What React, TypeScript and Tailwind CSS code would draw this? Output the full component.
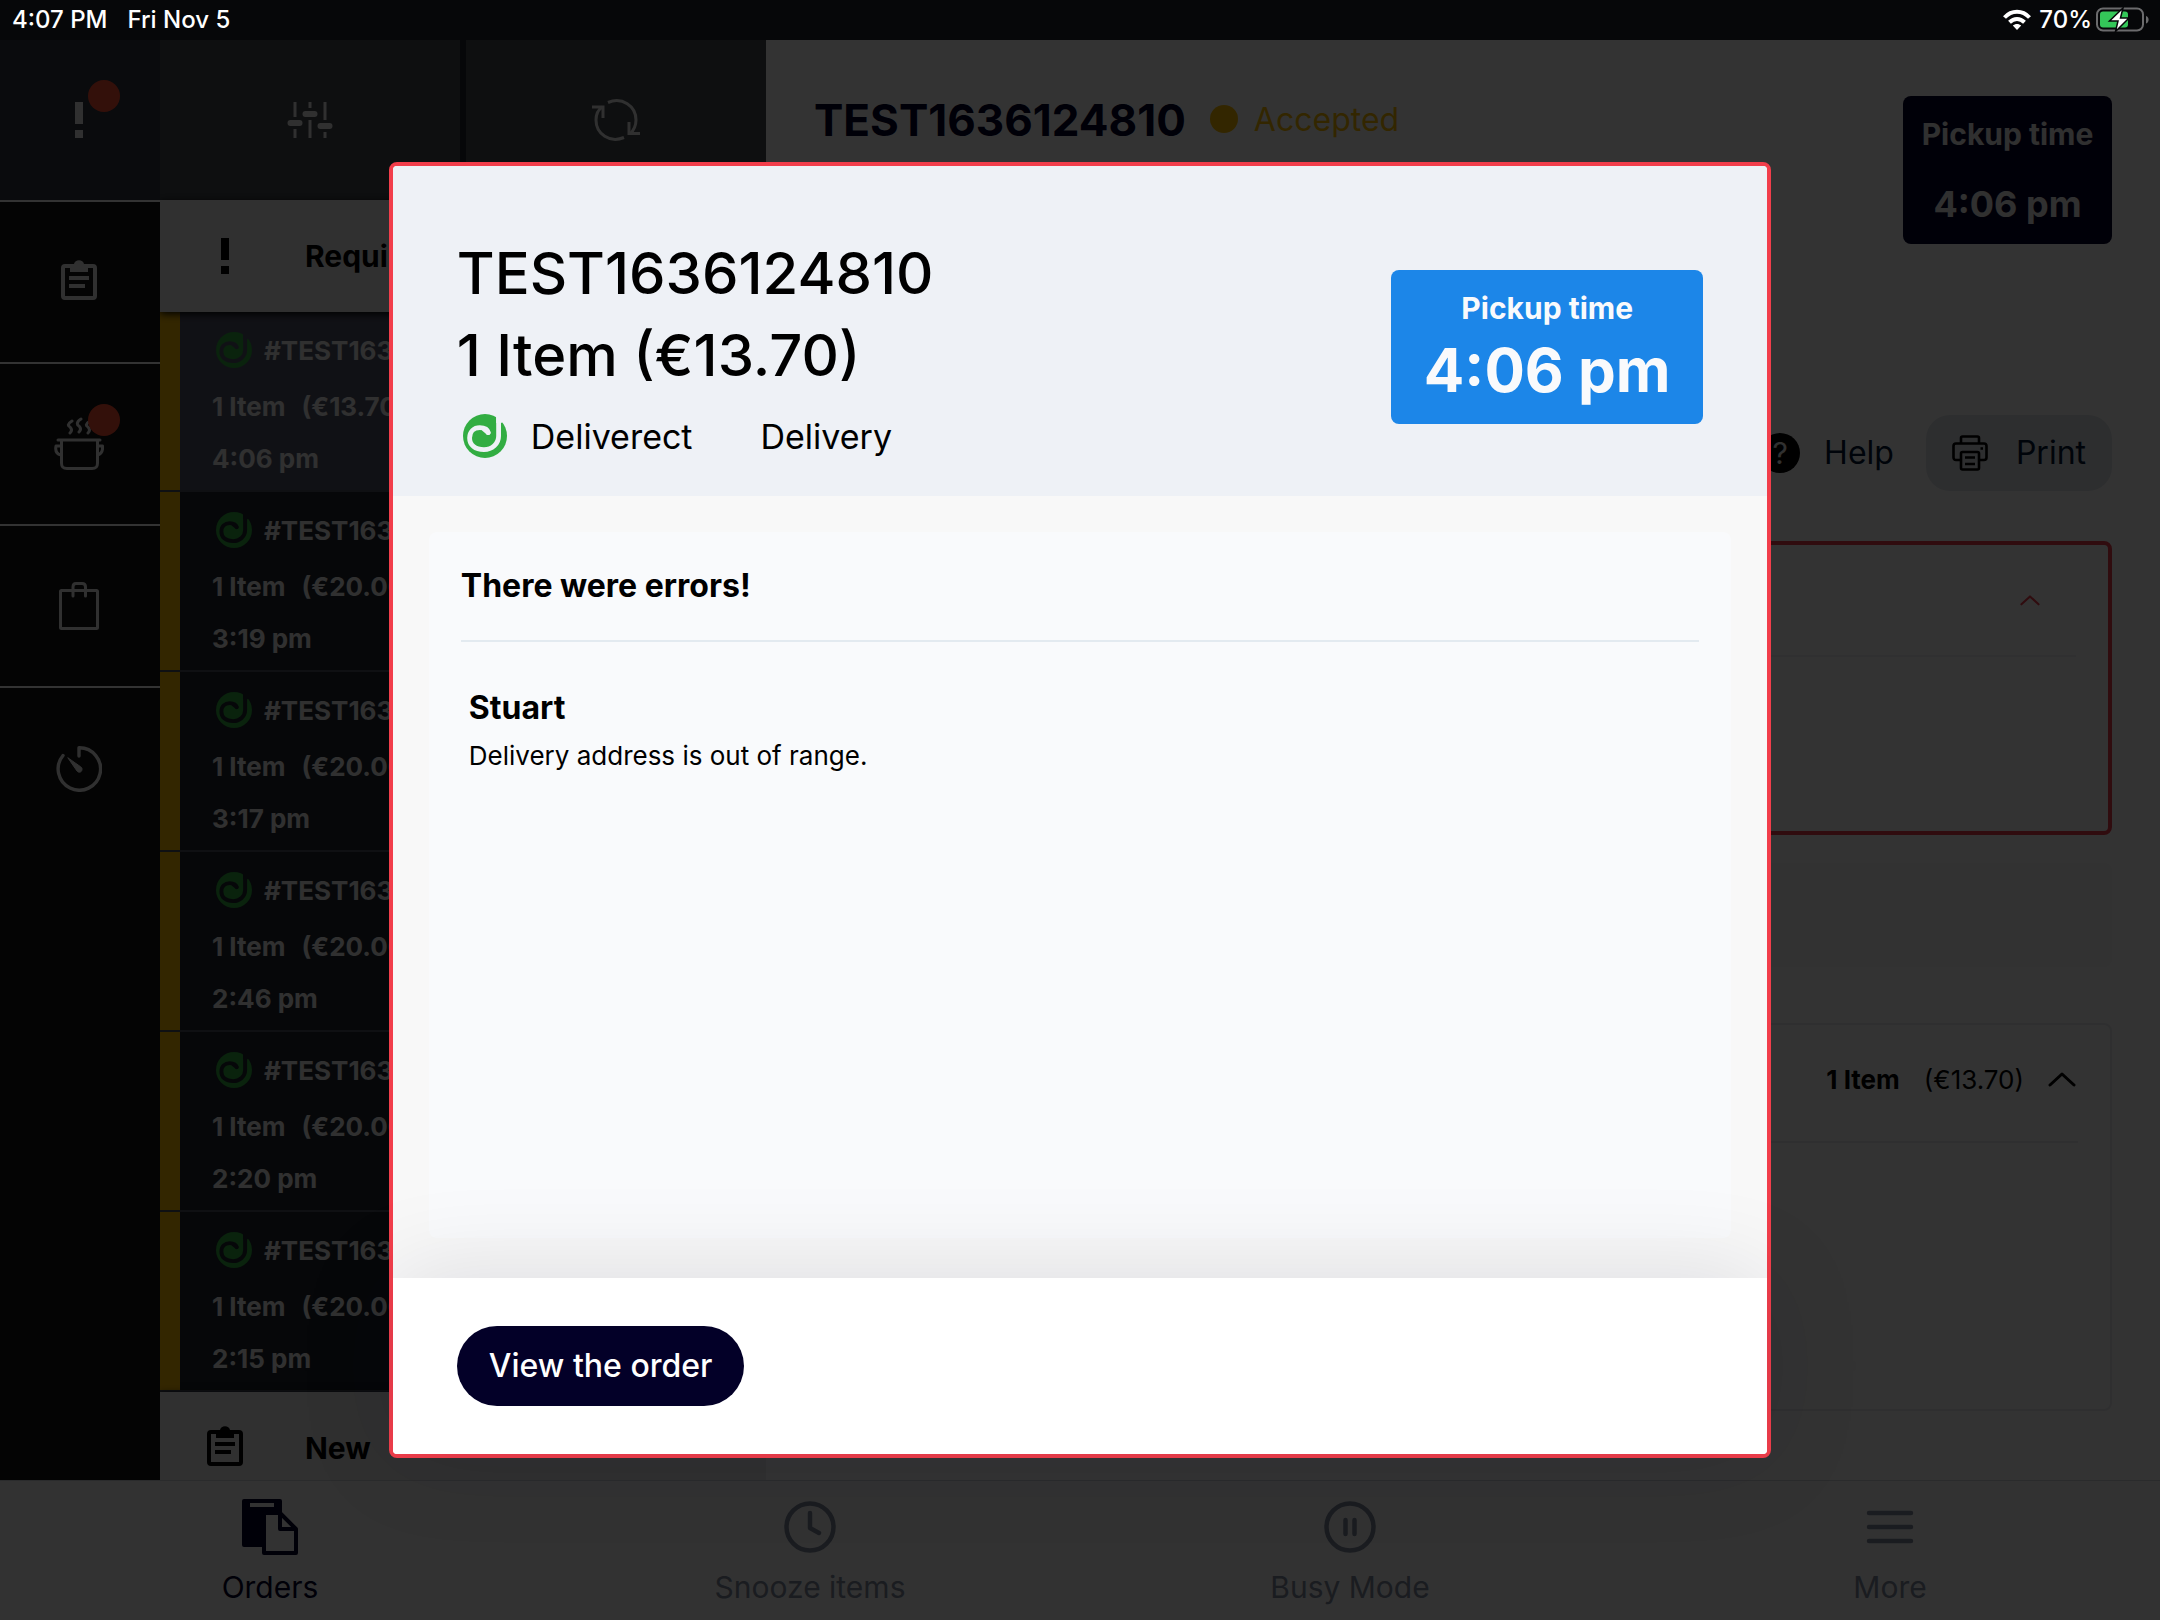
import { useId, type ReactNode } from 'react'

interface Order {
  total: string
  time: string
}

const orders: Order[] = [
  { total: '(€13.70)', time: '4:06 pm' },
  { total: '(€20.00)', time: '3:19 pm' },
  { total: '(€20.00)', time: '3:17 pm' },
  { total: '(€20.00)', time: '2:46 pm' },
  { total: '(€20.00)', time: '2:20 pm' },
  { total: '(€20.00)', time: '2:15 pm' },
]

const DeliverectLogo = ({ className }: { className: string }) => {
  const id = useId()
  return (
    <svg viewBox="0 0 44 44" className={className} aria-hidden="true">
      <mask id={id}>
        <rect width="44" height="44" fill="#fff" />
        <path
          d="M35.6 -2V22C35.6 30 29 35.6 21 35.6C12 35.6 6.6 31 6.6 24C6.6 17.5 11 13.6 16.8 13.6C22 13.6 25 16 25.2 18.6"
          fill="none"
          stroke="#000"
          strokeWidth="4.8"
          strokeLinecap="round"
        />
        <path d="M33.2 -1H44V2L38.4 9H33.2Z" fill="#000" />
        <path d="M20 14.5C25 14 28 16.5 27.6 19C27.2 21.6 24.6 21.4 22.6 19.4L19 16.6Z" fill="#000" />
      </mask>
      <circle cx="22" cy="22" r="22" fill="#32ad42" mask={`url(#${id})`} />
    </svg>
  )
}

const ExclamationIcon = ({ className }: { className: string }) => (
  <svg viewBox="0 0 10 36" className={className} fill="currentColor" aria-hidden="true">
    <path d="M1 0H9V22H1ZM1 28H9V36H1Z" />
  </svg>
)

const ClipboardIcon = ({ className }: { className: string }) => (
  <svg viewBox="0 0 36 40" className={className} aria-hidden="true">
    <rect x="2" y="6" width="32" height="32" rx="2" fill="none" stroke="currentColor" strokeWidth="4" />
    <path
      d="M9 4H13A5.2 5.2 0 0 1 23 4H27V12H9ZM18 4A2 2 0 1 0 18 8A2 2 0 1 0 18 4Z"
      fill="currentColor"
      fillRule="evenodd"
    />
    <path d="M8 18H28M8 26H24" stroke="currentColor" strokeWidth="4" />
  </svg>
)

const PotIcon = () => (
  <svg viewBox="0 0 50 54" className="h-[54px] w-[50px]" fill="none" stroke="currentColor" strokeWidth="3" strokeLinecap="round" strokeLinejoin="round" aria-hidden="true">
    <path d="M18 4C13 7 14 9 16 10C18 12 18 14 16 16M27 2C22 5 23 8 25 9C27 11 27 13 25 15M36 4C31 7 32 9 34 10C36 12 36 14 34 16" />
    <path d="M4 23H46M7.5 23V46C7.5 50 9 51.5 13 51.5H38C42 51.5 43.5 50 43.5 46V23" />
    <path d="M7 29H2C1 34 3 37 7 38M43.5 29H48.5C49 34 47 37 43.5 38" />
  </svg>
)

const BagIcon = () => (
  <svg viewBox="0 0 40 48" className="h-12 w-10" fill="none" stroke="currentColor" strokeWidth="3" strokeLinecap="round" strokeLinejoin="round" aria-hidden="true">
    <rect x="1.5" y="8.5" width="37" height="38" rx="1" />
    <path d="M14 14V5C14 2.5 15 1.5 17 1.5H23C25 1.5 26.5 2.5 26.5 5V14" />
  </svg>
)

const TimerIcon = () => (
  <svg viewBox="0 0 46 46" className="size-[46px]" fill="none" stroke="currentColor" strokeWidth="3.4" strokeLinecap="round" strokeLinejoin="round" aria-hidden="true">
    <path d="M23 10V1.8A21.2 21.2 0 1 1 7 9.5" />
    <path d="M12 12L21 25C23 27.5 26.5 26 26 22.5C25.8 21.8 25.5 21.3 25 21Z" fill="currentColor" strokeWidth="1" />
  </svg>
)

const SlidersIcon = () => (
  <svg viewBox="0 0 46 36" className="h-9 w-[46px]" fill="none" stroke="currentColor" aria-hidden="true">
    <path d="M8 0V15M8 27V36M23 0V6M23 18V36M38 0V18M38 30V36" strokeWidth="3" />
    <path d="M3.5 21H12.5M18.5 12H27.5M33.5 24H42.5" strokeWidth="6" strokeLinecap="round" />
  </svg>
)

const RefreshIcon = () => (
  <svg viewBox="0 0 50 42" className="h-[42px] w-[50px]" fill="none" stroke="currentColor" strokeWidth="3" aria-hidden="true">
    <path d="M17 3.5C31 -2.5 45 7 45 21C45 26 43 31 39 35" />
    <path d="M33 38.5C19 44.5 5 35 5 21C5 16 7 11 11 8" />
    <path d="M1 8H12V19M49 34.5H38V23" />
  </svg>
)

const PrinterIcon = () => (
  <svg viewBox="0 0 36 36" className="size-9 text-black" fill="none" stroke="currentColor" strokeWidth="2.6" strokeLinejoin="round" aria-hidden="true">
    <path d="M9 8.5V3C9 2 9.5 1.5 10.5 1.5H25.5C26.5 1.5 27 2 27 3V8.5" />
    <path d="M9 25H4C2.5 25 1.5 24 1.5 22.5V11C1.5 9.5 2.5 8.5 4 8.5H32C33.5 8.5 34.5 9.5 34.5 11V22.5C34.5 24 33.5 25 32 25H27" />
    <rect x="9" y="17" width="18" height="17.5" rx="1.5" />
    <path d="M13 22.5H23M13 29H23M28.5 13.5H31" />
  </svg>
)

const ChevronUp = ({ className }: { className: string }) => (
  <svg viewBox="0 0 28 16" className={className} fill="none" stroke="currentColor" strokeWidth="3" strokeLinecap="round" strokeLinejoin="round" aria-hidden="true">
    <path d="M2 14L14 3L26 14" />
  </svg>
)

const OrdersIcon = () => (
  <svg viewBox="0 0 56 56" className="size-14" fill="none" aria-hidden="true">
    <path d="M2 0H38Q40 0 40 2V14H24V48H2Q0 48 0 46V2Q0 0 2 0ZM8 4V8H32V4Z" fill="currentColor" fillRule="evenodd" />
    <path d="M22 14H38L54 30V54H22Z" stroke="currentColor" strokeWidth="4" strokeLinejoin="round" />
    <path d="M38 14V30H54" stroke="currentColor" strokeWidth="4" strokeLinejoin="round" />
  </svg>
)

const ClockIcon = () => (
  <svg viewBox="0 0 56 56" className="size-14" fill="none" stroke="currentColor" strokeWidth="4.5" strokeLinecap="round" strokeLinejoin="round" aria-hidden="true">
    <circle cx="28" cy="28" r="23.5" />
    <path d="M28 14V29L37 34" />
  </svg>
)

const PauseIcon = () => (
  <svg viewBox="0 0 56 56" className="size-14" fill="none" stroke="currentColor" strokeWidth="4.5" strokeLinecap="round" aria-hidden="true">
    <circle cx="28" cy="28" r="23.5" />
    <path d="M23.5 21V35M32.5 21V35" />
  </svg>
)

const MenuIcon = () => (
  <svg viewBox="0 0 56 56" className="size-14" stroke="currentColor" strokeWidth="4.5" strokeLinecap="round" aria-hidden="true">
    <path d="M7 14H49M7 28H49M7 42H49" />
  </svg>
)

const StatusBar = () => (
  <header className="relative z-20 flex h-10 shrink-0 items-center bg-[#060709] pr-2.5 pl-3 text-2xl font-medium text-white">
    <span>4:07 PM</span>
    <span className="ml-5">Fri Nov 5</span>
    <svg viewBox="0 0 28 22" className="mr-2 ml-auto h-[22px] w-7" fill="none" stroke="#fff" strokeWidth="4" aria-hidden="true">
      <path d="M1.5 8.5C8.5 0.8 19.5 0.8 26.5 8.5" />
      <path d="M6.5 13.2C11 8.8 17 8.8 21.5 13.2" />
      <path d="M14 21L9.8 16.6C12 14.4 16 14.4 18.2 16.6Z" fill="#fff" stroke="none" />
    </svg>
    <span>70%</span>
    <svg viewBox="0 0 54 26" className="ml-1 h-[26px] w-[54px]" aria-hidden="true">
      <rect x="1" y="1.5" width="46" height="22" rx="6" fill="none" stroke="#6b6b6d" strokeWidth="2" />
      <path d="M50 9C53.5 10 53.5 15.5 50 16.5Z" fill="#6b6b6d" />
      <rect x="4" y="4.5" width="28" height="16" rx="3" fill="#34c759" />
      <path d="M27 1L13.5 14H22L19.5 24.5L33 11H24.5Z" fill="#fff" stroke="#060709" strokeWidth="1.5" />
    </svg>
  </header>
)

interface RailButtonProps {
  label: string
  badge?: boolean
  className?: string
  children: ReactNode
}

const RailButton = ({ label, badge, className = 'border-b-2', children }: RailButtonProps) => (
  <button
    type="button"
    aria-label={label}
    className={`relative flex h-[162px] items-center justify-center border-white pr-0.5 text-[#f0f0f0] ${className}`}
  >
    {children}
    {badge && <span className="absolute top-10 right-10 size-8 rounded-full bg-[#ff5033]" />}
  </button>
)

const OrderRow = ({ order, selected }: { order: Order; selected: boolean }) => (
  <li
    className={`flex h-[180px] border-b-2 border-[#4b5060] text-[26px] font-bold text-[#f0f0f0] ${
      selected ? 'bg-[#52566a]' : 'bg-[#1e232d]'
    }`}
  >
    <span className="w-5 bg-[#ffbe00]" />
    <div className="flex flex-1 flex-col pt-3 pl-8">
      <div className="flex h-[52px] items-center gap-3 pl-1">
        <DeliverectLogo className="size-9" />
        <span>#TEST1636124810</span>
      </div>
      <div className="flex h-[60px] items-center gap-4">
        <span>1 Item</span>
        <span>{order.total}</span>
      </div>
      <div className="flex h-11 items-center">{order.time}</div>
    </div>
  </li>
)

const SectionHeader = ({ icon, title }: { icon: ReactNode; title: string }) => (
  <h2 className="relative flex h-28 shrink-0 items-center bg-[#f0f0f0] text-3xl font-bold text-black shadow-[0_2px_8px_#000]">
    <span className="flex w-[145px] justify-center pr-4">{icon}</span>
    {title}
  </h2>
)

const OrderList = () => (
  <section className="flex w-[606px] shrink-0 flex-col overflow-hidden bg-[#f0f0f0]">
    <div className="grid h-40 shrink-0 grid-cols-2 gap-1.5 bg-[#1e232d]">
      <button type="button" aria-label="Filter orders" className="flex items-center justify-center bg-[#464b50] text-[#f0f0f0]">
        <SlidersIcon />
      </button>
      <button type="button" aria-label="Refresh" className="flex items-center justify-center bg-[#464b50] text-[#f0f0f0]">
        <RefreshIcon />
      </button>
    </div>
    <SectionHeader icon={<ExclamationIcon className="h-9 w-2.5" />} title="Requires attention" />
    <ul className="shrink-0">
      {orders.map((order, i) => (
        <OrderRow key={order.time} order={order} selected={i === 0} />
      ))}
    </ul>
    <SectionHeader icon={<ClipboardIcon className="mb-1 h-10 w-9" />} title="New" />
  </section>
)

const OrderDetail = () => (
  <main className="flex min-w-0 flex-1 flex-col bg-white px-12 pt-14">
    <div className="flex h-[148px] items-start">
      <h1 className="text-[44px] leading-[48px] font-bold text-[#030028]">TEST1636124810</h1>
      <span className="mt-[9px] ml-6 size-7 rounded-full bg-[#ffbe00]" />
      <span className="ml-4 text-[32px] leading-[48px] text-[#ffbe00]">Accepted</span>
      <div className="ml-auto flex h-[148px] w-[209px] flex-col items-center rounded-lg bg-[#030028] pt-4 font-bold text-[#f0f0f0]">
        <span className="text-3xl leading-[44px]">Pickup time</span>
        <span className="mt-6 text-4xl leading-[48px]">4:06 pm</span>
      </div>
    </div>
    <div className="mt-[171px] flex h-[76px] shrink-0 items-center justify-end text-[32px] text-[#001432]">
      <button type="button" className="mr-8 flex items-center gap-6">
        <span className="flex size-10 items-center justify-center rounded-full bg-black text-3xl text-[#f0f0f0]">?</span>
        Help
      </button>
      <button type="button" className="flex h-[76px] items-center gap-7 rounded-3xl bg-[#e1e6eb] px-6.5">
        <PrinterIcon />
        Print
      </button>
    </div>
    <section className="mt-[50px] h-[294px] shrink-0 rounded-lg border-4 border-[#f03c4b] px-8">
      <div className="flex h-[112px] items-center justify-end border-b-2 border-[#f0f0f2] pr-9">
        <ChevronUp className="h-3 w-5 text-[#f03c4b]" />
      </div>
    </section>
    <section className="mt-7 h-[104px] shrink-0 rounded-lg bg-[#f8f8f8]" />
    <section className="mt-14 h-[388px] shrink-0 rounded-lg border-2 border-[#e8eaee] px-8">
      <div className="flex h-[118px] items-center justify-end border-b-2 border-[#e8eaee] pr-0.5 pb-2 text-[26px] text-black">
        <span className="font-bold">1 Item</span>
        <span className="ml-6">(€13.70)</span>
        <ChevronUp className="ml-6 h-4 w-7" />
      </div>
    </section>
  </main>
)

interface NavButtonProps {
  label: string
  active?: boolean
  children: ReactNode
}

const NavButton = ({ label, active = false, children }: NavButtonProps) => (
  <button
    type="button"
    className={`flex flex-col items-center gap-2.5 pt-[18px] text-3xl leading-[44px] ${active ? 'text-[#030028]' : 'text-[#828ca0]'}`}
  >
    {children}
    {label}
  </button>
)

const ErrorDialog = () => (
  <div className="absolute inset-0 z-10 flex items-center justify-center bg-black/80">
    <div
      role="dialog"
      aria-modal="true"
      aria-labelledby="order-title"
      className="flex h-4/5 w-[64%] flex-col rounded-lg border-4 border-[#f23e4b] bg-[#f8f8f8] text-black"
    >
      <div className="flex h-[330px] shrink-0 items-start justify-between rounded-t bg-[#eef1f6] px-16">
        <div className="flex flex-col pt-[66px]">
          <h2 id="order-title" className="text-[58px] leading-[82px] font-medium">
            TEST1636124810
            <br />1 Item (€13.70)
          </h2>
          <div className="flex h-20 items-center pl-1.5 text-[34px]">
            <DeliverectLogo className="size-11" />
            <span className="ml-6">Deliverect</span>
            <span className="ml-17">Delivery</span>
          </div>
        </div>
        <div className="mt-26 flex h-[154px] w-[312px] flex-col items-center rounded-lg bg-[#1c86e8] pt-4 font-bold text-[#f9fafc]">
          <span className="text-3xl leading-[44px]">Pickup time</span>
          <span className="mt-2 text-6xl leading-[64px]">4:06 pm</span>
        </div>
      </div>
      <div className="flex min-h-0 flex-1 flex-col px-9 pt-9 pb-10">
        <section className="flex-1 rounded-lg bg-[#f9fafc] px-8">
          <h3 className="flex h-[110px] items-center border-b-2 border-[#e3eaf0] text-[32px] font-bold">There were errors!</h3>
          <div className="px-2 pt-11">
            <h4 className="text-[32px] leading-[44px] font-bold">Stuart</h4>
            <p className="mt-1 text-[26px] leading-[44px]">Delivery address is out of range.</p>
          </div>
        </section>
      </div>
      <div className="relative flex h-44 shrink-0 items-center rounded-b bg-white px-16 shadow-[0_0_100px_rgba(3,0,40,0.12)]">
        <button type="button" className="h-20 rounded-full bg-[#030028] px-8 text-[32px] font-medium text-white">
          View the order
        </button>
      </div>
    </div>
  </div>
)

const App = () => {
  return (
    <div className="relative flex h-screen flex-col overflow-hidden bg-white font-['Inter','Liberation_Sans',sans-serif]">
      <StatusBar />
      <div className="flex min-h-0 flex-1">
        <nav className="flex w-40 shrink-0 flex-col bg-[#141414]" aria-label="Order states">
          <RailButton label="Requires attention" badge className="border-b-2 bg-[#323741]">
            <ExclamationIcon className="h-9 w-2.5" />
          </RailButton>
          <RailButton label="New">
            <ClipboardIcon className="mb-1 h-10 w-9" />
          </RailButton>
          <RailButton label="Preparing" badge>
            <PotIcon />
          </RailButton>
          <RailButton label="Ready">
            <BagIcon />
          </RailButton>
          <RailButton label="Scheduled" className="border-b-0">
            <TimerIcon />
          </RailButton>
        </nav>
        <OrderList />
        <OrderDetail />
      </div>
      <nav className="relative grid h-[140px] shrink-0 grid-cols-4 border-t border-[#d2d7dc] bg-[#fafafa]" aria-label="Main">
        <NavButton label="Orders" active>
          <OrdersIcon />
        </NavButton>
        <NavButton label="Snooze items">
          <ClockIcon />
        </NavButton>
        <NavButton label="Busy Mode">
          <PauseIcon />
        </NavButton>
        <NavButton label="More">
          <MenuIcon />
        </NavButton>
      </nav>
      <ErrorDialog />
    </div>
  )
}

export default App
